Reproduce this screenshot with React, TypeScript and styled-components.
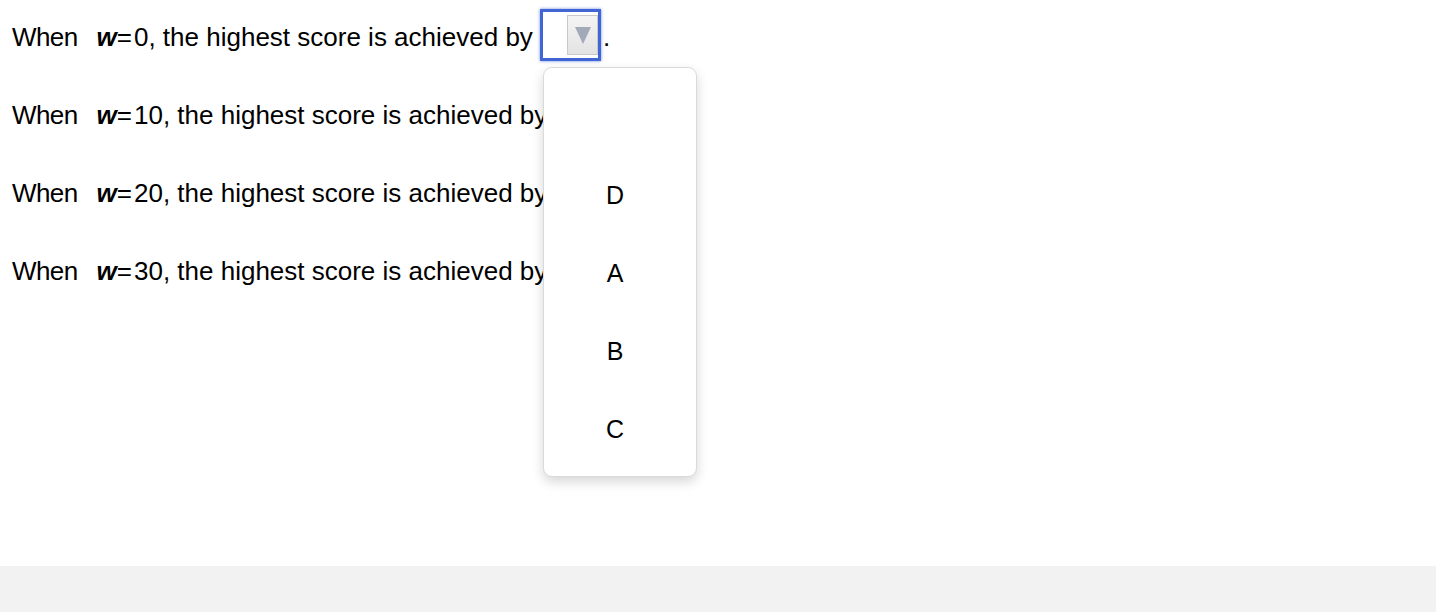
import React from "react";
import styled, { createGlobalStyle } from "styled-components";

const Global = createGlobalStyle`
  html, body { margin: 0; padding: 0; background: #ffffff; }
  body { font-family: "Liberation Sans", Arial, sans-serif; color: #000; }
`;

const Page = styled.div`
  height: 612px;
  display: flex;
  flex-direction: column;
  overflow: hidden;
`;

const Content = styled.div`
  flex: 1;
  padding-left: 12px;
  display: flex;
  flex-direction: column;
  gap: 4px;
`;

const Row = styled.div`
  height: 74px;
  display: flex;
  align-items: center;
  font-size: 26px;
  white-space: pre;
`;

const Lead = styled.span`
  letter-spacing: -0.6px;
`;

const Var = styled.span`
  font-weight: bold;
  font-style: italic;
  margin-left: 19px;
  margin-right: 0;
`;

const Num = styled.span`
  margin-left: 2px;
`;

const SelectWrap = styled.span<{ $focused?: boolean }>`
  position: relative;
  align-self: flex-start;
  margin-top: 9px;
  display: inline-flex;
  align-items: center;
  justify-content: flex-end;
  box-sizing: border-box;
  width: 61px;
  height: 52px;
  margin-left: 0;
  margin-right: 2px;
  padding: 4px 0;
  background: #fff;
  border: 3px solid ${(p) => (p.$focused ? "#4165d5" : "#d0d0d0")};
  box-shadow: ${(p) => (p.$focused ? "0 0 3px rgba(65, 101, 213, 0.75)" : "none")};
`;

const ArrowButton = styled.span`
  box-sizing: border-box;
  width: 31px;
  height: 40px;
  display: flex;
  align-items: center;
  justify-content: center;
  border: 1px solid #c9c9c9;
  background: linear-gradient(#f4f4f4, #e3e3e3);
`;

const Menu = styled.div`
  position: absolute;
  left: 0;
  top: calc(100% + 9px);
  width: 154px;
  box-sizing: border-box;
  padding: 10px 0 8px;
  background: #fff;
  border: 1px solid #dadada;
  border-radius: 9px;
  box-shadow: 0 5px 12px rgba(0, 0, 0, 0.16);
  z-index: 10;
`;

const Option = styled.div`
  height: 78px;
  display: flex;
  align-items: center;
  justify-content: center;
  padding-right: 10px;
  font-size: 25px;
  color: #000;
`;

const Footer = styled.div`
  height: 46px;
  background: #f2f2f2;
`;

const Arrow = () => (
  <svg width="16" height="17" viewBox="0 0 16 17">
    <polygon points="0,0 16,0 8,17" fill="#a2a9b8" />
  </svg>
);

function Select({ open }: { open?: boolean }) {
  return (
    <SelectWrap $focused={open}>
      <ArrowButton>
        <Arrow />
      </ArrowButton>
      {open && (
        <Menu>
          {["", "D", "A", "B", "C"].map((o, i) => (
            <Option key={i}>{o}</Option>
          ))}
        </Menu>
      )}
    </SelectWrap>
  );
}

const values = [0, 10, 20, 30];

export default function App() {
  return (
    <>
      <Global />
      <Page>
        <Content>
          {values.map((v, i) => (
            <Row key={v} style={{ zIndex: values.length - i }}>
              <Lead>When</Lead>
              <Var>w</Var>=<Num>{v}</Num>, the highest score is achieved by <Select open={i === 0} />.
            </Row>
          ))}
        </Content>
        <Footer />
      </Page>
    </>
  );
}
